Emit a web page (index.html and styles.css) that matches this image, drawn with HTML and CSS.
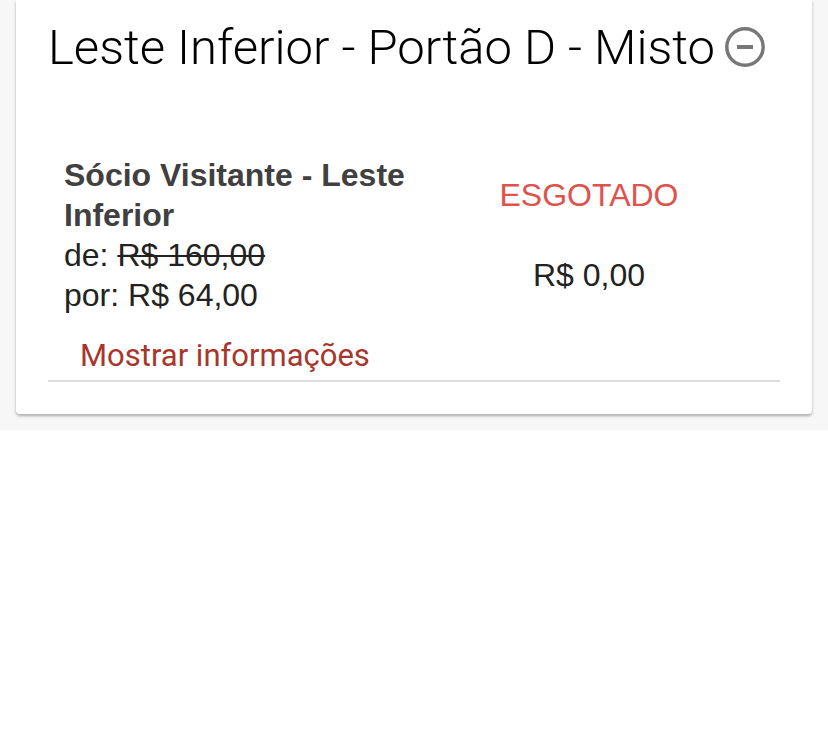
FILE: index.html
```html
<!DOCTYPE html>
<html lang="pt-BR">
<head>
    <meta charset="UTF-8">
    <meta name="viewport" content="width=device-width, initial-scale=1.0">
    <title>Ingressos</title>
    <link rel="stylesheet" href="styles.css">
</head>
<body>
    <div class="sector-wrap">
        <div class="sector-card">
            <div class="sector-header">
                <h2 class="sector-title">Leste Inferior - Portão D - Misto</h2>
                <button class="collapse-btn" aria-label="Recolher">
                    <svg width="40" height="40" viewBox="0 0 40 40">
                        <circle cx="20" cy="20" r="18.2" fill="none" stroke="#777" stroke-width="3.5"></circle>
                        <rect x="12" y="18" width="16" height="4" fill="#777"></rect>
                    </svg>
                </button>
            </div>

            <div class="ticket">
                <div class="ticket-row">
                    <div class="ticket-info">
                        <div class="ticket-name">Sócio Visitante - Leste Inferior</div>
                        <div class="ticket-price">de: <s>R$ 160,00</s></div>
                        <div class="ticket-price">por: R$ 64,00</div>
                    </div>
                    <div class="ticket-status">
                        <div class="sold-out">ESGOTADO</div>
                        <div class="total">R$ 0,00</div>
                    </div>
                </div>
                <button class="info-btn">Mostrar informações</button>
            </div>
        </div>
    </div>
</body>
</html>
```

FILE: styles.css
```css
body {
    margin: 0;
    font-family: "Liberation Sans", Arial, sans-serif;
    background-color: #fff;
}
.sector-wrap {
    background-color: #f7f7f7;
    padding: 0 16px 16px;
}
.sector-card {
    background-color: #fff;
    border-radius: 0 0 4px 4px;
    box-shadow: 0 2px 3px rgba(0, 0, 0, 0.3);
    padding: 0 32px 32px;
}
.sector-header {
    display: flex;
    align-items: center;
    height: 94px;
}
.sector-title {
    margin: 0;
    font-family: Roboto, sans-serif;
    font-weight: 300;
    font-size: 49px;
    color: #000;
}
.collapse-btn {
    background: none;
    border: none;
    padding: 0;
    margin-left: 10px;
    display: flex;
}
.ticket {
    margin-top: 61px;
    border-bottom: 2px solid #ddd;
}
.ticket-row {
    display: flex;
    padding: 0 16px;
}
.ticket-info,
.ticket-status {
    flex: 1;
}
.ticket-name {
    font-weight: bold;
    font-size: 32px;
    line-height: 40px;
    color: #404040;
}
.ticket-price {
    font-size: 32px;
    line-height: 40px;
    color: #222;
}
.ticket-price s {
    text-decoration-thickness: 2px;
}
.ticket-status {
    text-align: center;
    font-size: 32px;
}
.sold-out {
    color: #e0524c;
    margin-top: 20px;
    line-height: 40px;
}
.total {
    color: #222;
    margin-top: 40px;
    line-height: 40px;
}
.info-btn {
    display: block;
    background: none;
    border: none;
    font-family: Roboto, sans-serif;
    font-size: 31px;
    line-height: 40px;
    color: #a8362c;
    padding: 21px 32px 4px;
    cursor: pointer;
}
```
